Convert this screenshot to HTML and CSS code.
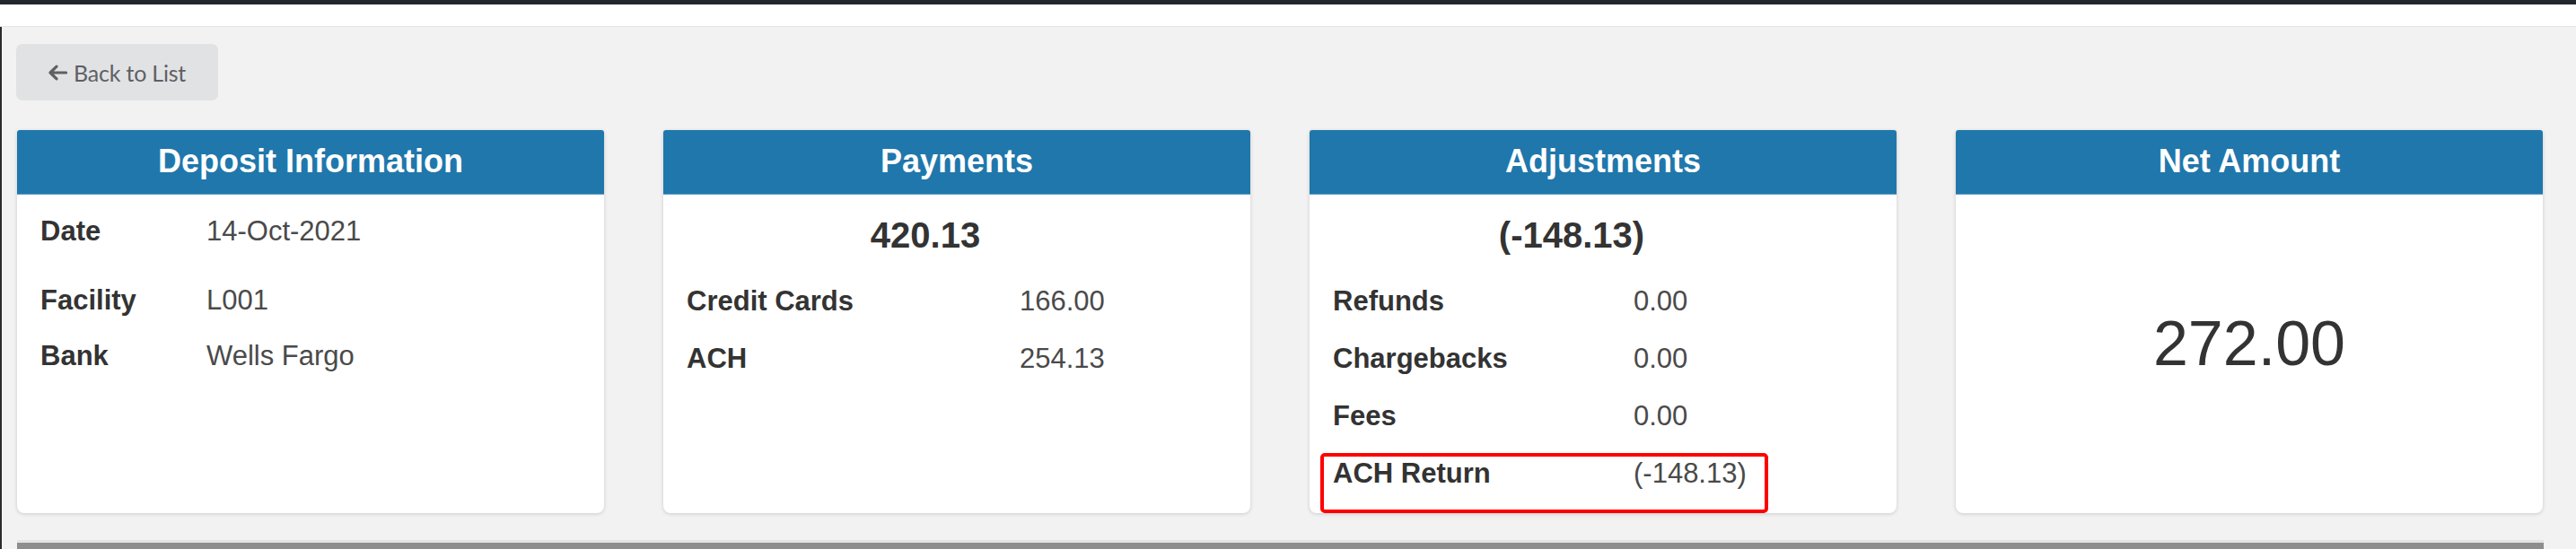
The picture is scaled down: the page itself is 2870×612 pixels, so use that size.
FILE: index.html
```html
<!DOCTYPE html>
<html lang="en">
<head>
<meta charset="utf-8">
<title>Deposit Details</title>
<link rel="stylesheet" href="styles.css">
</head>
<body>
<div class="topbar"></div>
<div class="header-strip"></div>
<main class="page">
  <div class="toolbar">
    <button class="btn-back" type="button">
      <svg class="btn-back__icon" width="22" height="18" viewBox="0 0 22 18" aria-hidden="true"><path d="M10 2.2 L3 9 L10 15.8 M3.4 9 H20.5" fill="none" stroke="currentColor" stroke-width="3.2" stroke-linecap="round" stroke-linejoin="round"/></svg>
      <span>Back to List</span>
    </button>
  </div>

  <div class="cards">
    <section class="card">
      <h2 class="card__title">Deposit Information</h2>
      <div class="card__body card__body--deposit">
        <div class="kv kv--deposit kv--first"><span class="kv__label">Date</span><span class="kv__value">14-Oct-2021</span></div>
        <div class="kv kv--deposit"><span class="kv__label">Facility</span><span class="kv__value">L001</span></div>
        <div class="kv kv--deposit"><span class="kv__label">Bank</span><span class="kv__value">Wells Fargo</span></div>
      </div>
    </section>

    <section class="card">
      <h2 class="card__title">Payments</h2>
      <div class="card__body">
        <div class="card__total">420.13</div>
        <div class="kv kv--payments"><span class="kv__label">Credit Cards</span><span class="kv__value">166.00</span></div>
        <div class="kv kv--payments"><span class="kv__label">ACH</span><span class="kv__value">254.13</span></div>
      </div>
    </section>

    <section class="card card--annotated">
      <h2 class="card__title">Adjustments</h2>
      <div class="card__body">
        <div class="card__total">(-148.13)</div>
        <div class="kv kv--adjust"><span class="kv__label">Refunds</span><span class="kv__value">0.00</span></div>
        <div class="kv kv--adjust"><span class="kv__label">Chargebacks</span><span class="kv__value">0.00</span></div>
        <div class="kv kv--adjust"><span class="kv__label">Fees</span><span class="kv__value">0.00</span></div>
        <div class="kv kv--adjust"><span class="kv__label">ACH Return</span><span class="kv__value">(-148.13)</span></div>
      </div>
      <div class="highlight"></div>
    </section>

    <section class="card">
      <h2 class="card__title">Net Amount</h2>
      <div class="card__body card__body--net">
        <div class="net-amount">272.00</div>
      </div>
    </section>
  </div>

  <div class="footer-bar"></div>
</main>
</body>
</html>
```

FILE: styles.css
```css
* { box-sizing: border-box; }

html, body {
  margin: 0;
  padding: 0;
  height: 612px;
  overflow: hidden;
  background: #f2f2f2;
  font-family: "Liberation Sans", Arial, sans-serif;
  color: #333;
}

.topbar {
  height: 5px;
  background: #23272b;
}

.header-strip {
  height: 25px;
  background: #ffffff;
  border-bottom: 1px solid #e4e4e4;
}

.page {
  border-left: 2px solid #2a2a2a;
  padding-top: 19px;
  min-height: 582px;
}

.toolbar {
  display: flex;
  padding-left: 16px;
}

.btn-back {
  display: flex;
  align-items: center;
  gap: 7px;
  height: 63px;
  width: 225px;
  padding: 0 0 0 35px;
  border: none;
  border-radius: 7px;
  background: #e1e2e4;
  color: #5f6064;
  font-family: Lato, "Liberation Sans", sans-serif;
  font-size: 25px;
  letter-spacing: -0.2px;
}

.btn-back__icon {
  flex: none;
}

.cards {
  display: flex;
  gap: 66px;
  margin-top: 33px;
  padding-left: 17px;
}

.card {
  width: 654px;
  height: 427px;
  background: #ffffff;
  border-radius: 4px 4px 8px 8px;
  box-shadow: 0 1px 4px rgba(0, 0, 0, 0.16);
  display: flex;
  flex-direction: column;
}

.card--annotated {
  position: relative;
}

.card__title {
  margin: 0;
  height: 72px;
  line-height: 70px;
  background: #2077ab;
  color: #ffffff;
  text-align: center;
  font-size: 36px;
  font-weight: bold;
  border-radius: 3px 3px 0 0;
  border-bottom: 1px solid #5a9ac4;
}

.card__body {
  flex: 1;
  padding-left: 26px;
}

.card__body--deposit {
  padding-top: 10px;
}

.card__total {
  padding: 4px 96px 0 0;
  line-height: 83px;
  text-align: center;
  font-size: 40px;
  font-weight: bold;
  color: #333;
}

.kv {
  display: grid;
  height: 64px;
  line-height: 64px;
  font-size: 31px;
}

.kv--deposit {
  grid-template-columns: 185px 1fr;
  height: 62px;
  line-height: 62px;
}

.kv--first {
  margin-bottom: 15px;
}

.kv--payments {
  grid-template-columns: 371px 1fr;
}

.kv--adjust {
  grid-template-columns: 335px 1fr;
}

.kv__label {
  font-weight: bold;
  color: #333;
}

.kv__value {
  color: #4a4a4a;
}

.card__body--net {
  display: flex;
  align-items: center;
  justify-content: center;
  padding: 0 0 23px 0;
}

.net-amount {
  font-size: 70px;
  line-height: 80px;
  color: #333;
}

.highlight {
  position: absolute;
  left: 12px;
  top: 360px;
  width: 499px;
  height: 67px;
  border: 4px solid #ff0000;
  border-radius: 5px;
  pointer-events: none;
}

.footer-bar {
  margin: 30px 0 0 17px;
  width: 2815px;
  height: 10px;
  border-top: 3px solid #e4e4e4;
  background: #8e8e8e;
}
```
